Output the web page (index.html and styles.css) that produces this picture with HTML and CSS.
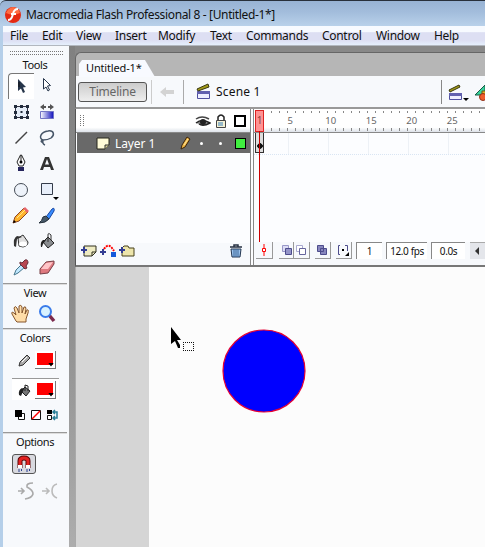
FILE: index.html
```html
<!DOCTYPE html>
<html lang="en">
<head>
<meta charset="utf-8">
<title>Macromedia Flash Professional 8</title>
<link rel="stylesheet" href="styles.css">
</head>
<body>
<div class="app">
  <header class="titlebar">
    <svg class="logo" width="18" height="18" viewBox="0 0 18 18"><circle cx="9" cy="9" r="8" fill="#e52a12"/><path d="M2 7Q4 2 9 1Q15 2 16 7Q9 10 2 7" fill="#ff6d43"/><path d="M14 3Q10 3 9 8L8 11Q7 14 4 14M7 8H12" fill="none" stroke="#fff" stroke-width="2"/></svg>
    <span class="title">Macromedia Flash Professional 8 - [Untitled-1*]</span>
  </header>
  <nav class="menu">
    <span class="m1">File</span><span class="m2">Edit</span><span class="m3">View</span><span class="m4">Insert</span><span class="m5">Modify</span><span class="m6">Text</span><span class="m7">Commands</span><span class="m8">Control</span><span class="m9">Window</span><span class="m10">Help</span>
  </nav>
  <div class="body">
    <aside class="tools">
      <div class="grip"></div>
      <h2 class="label tools-label">Tools</h2>
      <div class="tool-grid">
        <div class="tool active"><svg width="26" height="26"><path d="M10 6L18 14L15 14.5L17 19L15 20L13 15.5L10 18Z" fill="#26354a"/><path d="M11 9V14" stroke="#111"/></svg></div>
        <div class="tool"><svg width="26" height="26"><path d="M9.500 5.500L16.500 12.500L13.500 13L15.500 17L14 18L12 14L9.500 16Z" fill="#fff" stroke="#26354a"/></svg></div>
        <div class="tool"><svg width="26" height="26"><path d="M7.500 7.500H19.500V18.500H7.500Z" fill="#e5edf8" stroke="#334"/><path d="M6 6h3v3h-3zM12 6h3v3h-3zM18 6h3v3h-3zM6 12h3v3h-3zM18 12h3v3h-3zM6 17h3v3h-3zM12 17h3v3h-3zM18 17h3v3h-3zM12.500 12h2v2h-2z" fill="#222c3c"/></svg></div>
        <div class="tool"><svg width="26" height="26"><defs><linearGradient id="gr"><stop stop-color="#fff"/><stop offset="1" stop-color="#1010bd"/></linearGradient></defs><path d="M6.500 12.500H19.500V19.500H6.500Z" fill="url(#gr)" stroke="#7375c4"/><path d="M6 8L10 5V7H12V9H10V11ZM20 8L16 5V7H14V9H16V11Z" fill="#555"/></svg></div>
        <div class="tool"><svg width="26" height="26"><path d="M7.500 18.500L19 7" stroke="#444" stroke-width="1.400"/></svg></div>
        <div class="tool"><svg width="26" height="26"><path d="M9 15C4 13 7 7 14 6C20 5 21 10 17 13C14 15 11 15 9 15Q6 16 8 17Q10 15 9 15Q8 19 11 20" fill="none" stroke="#465567" stroke-width="1.500"/></svg></div>
        <div class="tool"><svg width="26" height="26"><path d="M12.500 4L9 11L11 15H15L17 11L13.500 4Z" fill="#fff" stroke="#222"/><path d="M13 4V11" stroke="#222"/><circle cx="13" cy="11" r="1.500"/><path d="M10 16H16V20H10Z" fill="#25245c"/></svg></div>
        <div class="tool"><svg width="26" height="26"><path d="M6 19L11 6H15L20 19H17L16 16H10L9 19ZM11 13.500H15L13 8Z" fill="#333" fill-rule="evenodd"/></svg></div>
        <div class="tool"><svg width="26" height="26"><circle cx="13" cy="13" r="6.500" fill="#eef3fa" stroke="#444b55"/></svg></div>
        <div class="tool"><svg width="26" height="26"><path d="M7.500 6.500H18.500V17.500H7.500Z" fill="#e8effa" stroke="#343b49"/><path d="M19 20H25L22 23Z"/></svg></div>
        <div class="tool"><svg width="26" height="26"><path d="M5 20L7 14L16 5L20 9L11 18Z" fill="#ffb42d" stroke="#8b4524"/><path d="M15 6L17 4L21 8L19 10Z" fill="#e8666c"/><path d="M9 15L17 7" stroke="#ffe68a"/><path d="M5 20L6 17L8 19Z"/></svg></div>
        <div class="tool"><svg width="26" height="26"><path d="M12 14L18 6Q21 4 20 8L15 16Z" fill="#378cff" stroke="#1745a1"/><path d="M5 20Q8 18 9 14L12 13L15 16Q12 20 5 20" fill="#475969" stroke="#26323c"/></svg></div>
        <div class="tool"><svg width="26" height="26"><path d="M10 9L15 6L20 13Q20 17 15 18L11 17Z" fill="#ddd" stroke="#333"/><path d="M6 17Q5 9 9 7L14 8L9 10L8 18Z" fill="#333"/><ellipse cx="15" cy="15" rx="4" ry="2.500" fill="#fff"/></svg></div>
        <div class="tool"><svg width="26" height="26"><path d="M9 13L14 8L20 14L14 19Z" fill="#8a8d90" stroke="#222"/><path d="M14 13V6Q14 3 17 6V11" fill="none" stroke="#333"/><path d="M7 18Q6 13 9 11L12 11L9 15L8 18Z" fill="#222"/></svg></div>
        <div class="tool"><svg width="26" height="26"><path d="M6 20L8 15L14 9L17 12L10 18Z" fill="#bfe8ff" stroke="#47758b"/><path d="M12 7L14 8L17 5Q20 4 20 8L18 11L19 13L17 14L12 9Z" fill="#b84651" stroke="#672d38"/></svg></div>
        <div class="tool"><svg width="26" height="26"><path d="M6 14L12 7L20 6L20 9L14 18L6 19Z" fill="#df7980" stroke="#784047"/><path d="M7 14L12 8L19 7L14 14Z" fill="#ffc5c8"/></svg></div>
      </div>
      <div class="rule"></div>
      <h2 class="label">View</h2>
      <div class="view-row">
        <svg width="26" height="26"><path d="M8 20L4 13Q3 10 6 12L8 14L6 7Q7 4 9 7L11 12V5Q13 3 14 6V12L16 6Q18 5 18 8L17 13L19 9Q21 8 20 12L18 18V21H9Z" fill="#ffdda8" stroke="#85552c"/></svg>
        <svg width="26" height="26"><path d="M15 14L20 20" stroke="#7b2a4d" stroke-width="3.500"/><circle cx="11.500" cy="10.500" r="5.500" fill="#d8f2ff" stroke="#397bea" stroke-width="2"/></svg>
      </div>
      <div class="rule"></div>
      <h2 class="label">Colors</h2>
      <div class="color-row">
        <svg width="20" height="22"><path d="M5 17L6 13L13 6L16 9L9 16Z" fill="#aaa" stroke="#333"/><path d="M8 13L13 8" stroke="#fff"/></svg>
        <div class="swatch"><i></i></div>
      </div>
      <div class="color-row fill">
        <svg width="20" height="22"><path d="M7 12L11 8L16 12L12 17Z" fill="#777" stroke="#222"/><path d="M11 12V6L14 7V12" fill="none" stroke="#222"/><path d="M5 16Q4 11 8 9L10 10L7 17Z" fill="#222"/></svg>
        <div class="swatch"><i></i></div>
      </div>
      <div class="mini-row">
        <svg width="12" height="12"><path d="M4.500 4.500H10.500V10.500H4.500Z" fill="#fff" stroke="#111"/><path d="M1 1H8V8H1Z"/></svg>
        <svg width="12" height="12"><path d="M1.500 1.500H10.500V10.500H1.500Z" fill="#fff" stroke="#111"/><path d="M2 10L10 2" stroke="red" stroke-width="1.500"/></svg>
        <svg width="14" height="12"><path d="M1 1H6V5H1Z"/><path d="M1.500 6.500H5.500V10.500H1.500Z" fill="#fff" stroke="#111"/><path d="M7 3H11V9H7M9 1L7 3L9 5M9 7L7 9L9 11" fill="none" stroke="#287e96" stroke-width="1.500"/></svg>
      </div>
      <div class="rule"></div>
      <h2 class="label">Options</h2>
      <div class="magnet"><svg width="22" height="18"><path d="M7 13V6Q7 3 11 3Q15 3 15 6V13" fill="none" stroke="#5c0808" stroke-width="5"/><path d="M7 13V6Q7 3 11 3Q15 3 15 6V13" fill="none" stroke="#e42222" stroke-width="3"/><path d="M5 11.500H9M13 11.500H17" stroke="#fff" stroke-width="3"/><path d="M6 14V17M8.500 14V16M14 14V17M16.500 14V16" stroke="#283f91"/></svg></div>
      <div class="curves">
        <svg width="22" height="22"><path d="M3 11H8M6 8L9 11L6 14M18 3Q11 3 12 7Q18 10 18 14Q17 18 10 19" fill="none" stroke="#aaa" stroke-width="1.600"/></svg>
        <svg width="22" height="22"><path d="M2 11H8M6 8L9 11L6 14M17 4Q12 5 12 11Q12 16 17 18" fill="none" stroke="#bbb" stroke-width="1.600"/></svg>
      </div>
    </aside>
    <div class="gutter"></div>
    <main class="document">
      <div class="tabs"><div class="tab"><span>Untitled-1*</span></div></div>
      <div class="scenebar">
        <div class="timeline-btn">Timeline</div>
        <div class="back"><svg width="16" height="12"><path d="M0 6L6 1V4H14V8H6V11Z" fill="#d3d3d3"/></svg></div>
        <svg class="clap" width="16" height="17"><path d="M1.500 8.500H13.500V15.500H1.500Z" fill="#eeefff" stroke="#5050a0"/><path d="M1 8H14V11H1Z" fill="#6261af"/><path d="M1 6L12 1L13 4L2 8Z" fill="#a19919" stroke="#38370e"/></svg>
        <span class="scene">Scene 1</span>
        <div class="scene-actions">
          <svg width="22" height="18"><path d="M1.500 9.500H13.500V15.500H1.500Z" fill="#eeefff" stroke="#5050a0"/><path d="M1 9H14V12H1Z" fill="#6261af"/><path d="M1 6L11 1L12 3L2 8Z" fill="#a19919" stroke="#38370e"/><path d="M15 14H21L18 17Z"/></svg>
          <svg width="12" height="18"><path d="M1 11L11 1V11Z" fill="#38d39b" stroke="#175a45"/><path d="M8 7H13V12H8Z" fill="#e3b622" stroke="#65541a"/><circle cx="9" cy="13" r="3.500" fill="#f05d2c" stroke="#903018"/></svg>
        </div>
      </div>
      <section class="timeline">
        <div class="layers">
          <div class="layers-head">
            <i class="dots"></i>
            <svg class="eye" width="16" height="12"><path d="M1 4Q7 0 14 4" fill="none" stroke="#444" stroke-width="1.500"/><path d="M1 8Q7 3 15 8Q8 12 4 9" fill="#888" stroke="#222" stroke-width="1.500"/><circle cx="8" cy="7" r="3" fill="#222"/></svg>
            <svg class="lock" width="12" height="14"><path d="M3 7V3Q6-1 9 3V7" fill="none" stroke="#222" stroke-width="1.500"/><path d="M1.500 6.500H10.500V13.500H1.500Z" fill="#f5f2d5" stroke="#444"/><path d="M3 9H8M3 11H8" stroke="#377fbb"/></svg>
            <i class="outline"></i>
          </div>
          <div class="layer">
            <svg class="page" width="14" height="13"><path d="M1 1H13V8L9 12H1Z" fill="#fffbd8" stroke="#27271c"/><path d="M9 12V8H13" fill="#d4cf9b" stroke="#333"/></svg>
            <span>Layer 1</span>
            <svg class="pen" width="12" height="14"><path d="M2 13L3 9L8 1L11 3L6 11Z" fill="#efb647" stroke="#3c250d"/><path d="M5 9L9 3" stroke="#ffe8a0"/></svg>
            <i class="dot"></i><i class="dot"></i><i class="green"></i>
          </div>
          <div class="layers-foot">
            <svg width="17" height="14"><path d="M3 2H15V8L11 12H3Z" fill="#eeebc2" stroke="#303020"/><path d="M11 12V8H15" fill="none" stroke="#303020"/><path d="M0 6H6M3 3V9" stroke="#333d93" stroke-width="2"/></svg>
            <svg width="17" height="14"><path d="M4 5Q8-1 12 4L14 7" fill="none" stroke="red" stroke-width="2" stroke-dasharray="2 1"/><path d="M0 8H6M3 5V11" stroke="#333d93" stroke-width="2"/><path d="M11 8H16V13H11Z" fill="#1459db"/></svg>
            <svg width="17" height="14"><path d="M3 4L5 2H9L10 4H15V12H3Z" fill="#ede5ab" stroke="#47401c"/><path d="M0 6H6M3 3V9" stroke="#333d93" stroke-width="2"/></svg>
            <svg class="trash" width="14" height="14"><path d="M1 3H13M5 3V1H9V3" fill="none" stroke="#273142" stroke-width="1.500"/><path d="M2 5H12L11 13H3Z" fill="#9cc4ee" stroke="#243650"/><path d="M5 5V13M7 5V13M9 5V13" stroke="#3a6496"/></svg>
          </div>
        </div>
        <div class="frames">
          <div class="ruler">
            <span>5</span><span>10</span><span>15</span><span>20</span><span>25</span>
          </div>
          <div class="frame-row"><div class="keyframe"></div></div>
          <div class="frames-foot">
            <div class="btn b1"><svg width="16" height="16"><path d="M8 2V14" stroke="red"/><path d="M6.500 6.500H9.500V9.500H6.500Z" fill="#fff" stroke="red"/></svg></div>
            <div class="btn b2"><svg width="14" height="16"><path d="M3.500 3.500H9.500V9.500H3.500Z" fill="#ddddf5" stroke="#9998c8"/><path d="M6.500 6.500H12.500V12.500H6.500Z" fill="#9494c8" stroke="#4d4c8c"/></svg></div>
            <div class="btn b3"><svg width="14" height="16"><path d="M2.500 3.500H8.500V9.500H2.500Z" fill="#fff" stroke="#aaaad0"/><path d="M5.500 6.500H11.500V12.500H5.500Z" fill="#fff" stroke="#66659d"/></svg></div>
            <div class="btn b4"><svg width="14" height="16"><path d="M2.500 3.500H8.500V9.500H2.500ZM5.500 6.500H11.500V12.500H5.500Z" fill="#8786bd" stroke="#4d4c8c"/></svg></div>
            <div class="btn b5"><svg width="14" height="16"><path d="M4 3.500H2.500V12.500H4M9 3.500H11.500V9" fill="none" stroke="#4d4c8c"/><path d="M6 7H8V9H6Z"/><path d="M13 10V14H9Z"/></svg></div>
            <div class="field f1">1</div><div class="field f2">12.0 fps</div><div class="field f3">0.0s</div>
            <div class="scroll"><svg width="14" height="16"><path d="M9 4V12L5 8Z" fill="#333"/></svg></div>
          </div>
          <div class="playhead"><b>1</b></div>
        </div>
      </section>
      <div class="stage">
        <div class="paste"></div>
        <svg class="canvas" width="336" height="280"><circle cx="115" cy="104" r="41" fill="#00f" stroke="#e50032" stroke-width="1.200"/><path d="M22 60V77L26 74L29 81H31V78L28 73H32Z" fill="#000"/><path d="M34 75.500H45M34 83.500H45M34.500 75V84M44.500 75V84" fill="none" stroke="#111" stroke-dasharray="1 1"/></svg>
      </div>
    </main>
  </div>
</div>
</body>
</html>
```
FILE: styles.css
```css
* { box-sizing: border-box; }
body { margin: 0; font-family: "Noto Sans", "Open Sans", sans-serif; font-size: 11px; color: #111; overflow: hidden; }
svg { display: block; flex: none; }
.app { width: 485px; height: 547px; display: flex; flex-direction: column; background: #b5cfe9; }
.titlebar { height: 26px; flex: none; display: flex; align-items: center; padding: 2px 0 0 4px; border-top: 1px solid #28303b; border-top-left-radius: 6px; background: linear-gradient(#98b3d4, #a3bddc 45%, #b9d1ea); }
.title { margin-left: 4px; font-size: 12px; letter-spacing: -.36px; white-space: nowrap; }
.menu { height: 20px; flex: none; margin-left: 3px; padding-left: 7px; display: flex; align-items: center; background: linear-gradient(#f7faff 0 30%, #dddff3 35% 75%, #e5effc); border-bottom: 1px solid #b2b7bf; font-size: 12px; line-height: 18px; letter-spacing: -.3px; }
.menu span { white-space: nowrap; flex: none; }
.m1 { width: 32px; } .m2 { width: 34px; } .m3 { width: 39px; } .m4 { width: 43px; } .m5 { width: 52px; } .m6 { width: 36px; } .m7 { width: 76px; } .m8 { width: 54px; } .m9 { width: 58px; } .m10 { width: 40px; }
.body { flex: 1; min-height: 0; display: flex; padding-left: 3px; }
.tools { width: 66px; background: #f7f9fc; padding: 5px 2px 0 0; }
.grip { width: 53px; height: 4px; margin-left: 7px; background: repeating-linear-gradient(90deg, #777 0 1px, transparent 1px 2px) 0 0 / 100% 1px no-repeat, repeating-linear-gradient(90deg, #777 0 1px, transparent 1px 2px) 0 3px / 100% 1px no-repeat; }
.label { margin: 0; height: 16px; line-height: 16px; font-size: 11px; font-weight: 400; text-align: center; letter-spacing: -.4px; }
.tools-label { margin-top: 2px; }
.tool-grid { display: grid; grid-template-columns: 26px 26px; grid-auto-rows: 26px; padding-left: 5px; }
.active { background: #fff; border-top: 1px solid #777; border-left: 1px solid #777; border-radius: 4px 0 0 0; }
.active svg { margin: -1px 0 0 -1px; }
.rule { height: 2px; border-top: 1px solid #999; border-bottom: 1px solid #ddd; margin-top: 2px; }
.view-row { display: flex; height: 25px; padding-left: 5px; }
.color-row { display: flex; align-items: center; height: 27px; padding-left: 11px; gap: 1px; }
.color-row.fill { height: 22px; border-top: 1px solid #999; margin: 5px 8px 0 9px; padding-left: 2px; background: #fff; }
.swatch { width: 21px; height: 18px; padding: 2px 3px 3px 2px; background: #fff; border-right: 1px solid #777; border-bottom: 1px solid #777; position: relative; }
.swatch::before { content: ""; display: block; width: 16px; height: 12px; background: red; }
.swatch i { position: absolute; right: 1px; bottom: 1px; width: 6px; height: 4px; background: #000; clip-path: polygon(0 0,100% 0,50% 100%); }
.mini-row { display: flex; gap: 4px; padding: 9px 0 0 11px; height: 30px; }
.magnet { width: 24px; height: 20px; margin: 4px 0 0 9px; border: 1px solid #555; border-radius: 3px; background: #d8d9df; }
.curves { display: flex; gap: 3px; margin: 6px 0 0 12px; }
.gutter { width: 6px; background: linear-gradient(#818181, #8d8d8d 50%, #adadad); }
.document { flex: 1; min-width: 0; border-top: 6px solid #888; background: #888; display: flex; flex-direction: column; }
.tabs { height: 24px; flex: none; padding: 7px 0 0 3px; background: #b6b6b6; border-top: 1px solid #666; border-left: 1px solid #666; border-radius: 6px 0 0 0; }
.tab { width: 76px; height: 17px; padding: 0 0 0 7px; background: #f8faff; clip-path: polygon(0 4px, 3px 0, 66px 0, 76px 100%, 0 100%); white-space: nowrap; line-height: 16px; letter-spacing: -.15px; }
.scenebar { height: 33px; flex: none; border-left: 1px solid #666; border-bottom: 2px solid #999; background: #f7f9fc; padding-left: 2px; display: flex; align-items: center; }
.timeline-btn { width: 69px; height: 20px; border: 1px solid #555; border-radius: 3px; background: linear-gradient(#ccc, #eee); color: #666; text-align: center; line-height: 18px; font-size: 12px; letter-spacing: -.2px; }
.back { width: 33px; margin-left: 4px; height: 24px; border-left: 1px solid #ccc; border-right: 1px solid #aaa; display: flex; align-items: center; padding-left: 8px; }
.clap { margin-left: 12px; }
.scene { margin-left: 4px; font-size: 12px; white-space: nowrap; letter-spacing: .2px; }
.scene-actions { margin-left: auto; height: 24px; border-left: 1px solid #888; padding: 4px 0 0 6px; display: flex; gap: 4px; margin-right: -1px; }
.timeline { height: 158px; flex: none; border-left: 1px solid #555; border-bottom: 2px solid #777; background: #fcfdff; display: flex; }
.layers { width: 175px; flex: none; border-right: 1px solid #888; display: flex; flex-direction: column; }
.layers-head { height: 24px; display: flex; align-items: center; background: linear-gradient(#fff 0 80%, #dde2e9); border-bottom: 1px solid #888; }
.dots { width: 6px; height: 11px; margin-left: 4px; background: repeating-linear-gradient(#777 0 1px, transparent 1px 2px) 0 0 / 1px 11px no-repeat, repeating-linear-gradient(#777 0 1px, transparent 1px 2px) 3px 0 / 1px 11px no-repeat; }
.eye { margin-left: 109px; } .lock { margin-left: 4px; }
.outline { width: 12px; height: 12px; border: 2px solid #000; background: #fff; margin-left: 7px; }
.layer { height: 20px; display: flex; align-items: center; margin-left: 1px; background: #696969; color: #fff; font-size: 12px; }
.page { margin-left: 19px; }
.layer span { width: 64px; margin-left: 5px; letter-spacing: -.1px; }
.dot { width: 3px; height: 3px; border-radius: 2px; background: #fff; margin-left: 9px; }
.dot + .dot { margin-left: 16px; }
.green { width: 11px; height: 11px; border: 1px solid #000; background: #40ef40; margin-left: 13px; }
.layers-foot { margin-top: auto; height: 22px; display: flex; gap: 2px; padding: 1px 7px 0 5px; background: #f7f9fc; }
.trash { margin-left: auto; }
.frames { flex: 1; min-width: 0; margin-left: 2px; border-left: 1px solid #888; position: relative; display: flex; flex-direction: column; }
.ruler { height: 24px; flex: none; border-bottom: 1px solid #888; padding-left: 16px; display: flex; color: #666; font-size: 9.500px; line-height: 23px; background: repeating-linear-gradient(90deg, #888 0 1px, transparent 1px 8px) 9px 2px / 100% 2px no-repeat, repeating-linear-gradient(90deg, #888 0 1px, transparent 1px 8px) 9px 19px / 100% 3px no-repeat, linear-gradient(#fff 0 80%, #dde2e9); }
.ruler span { width: 40.500px; flex: none; text-align: center; }
.frame-row { height: 22px; padding-left: 1px; background: repeating-linear-gradient(90deg, transparent 0 39px, #edf1f6 39px 40px) -5px 0; border-bottom: 1px dotted #d9e5f3; }
.keyframe { width: 9px; height: 20px; border: 1px solid #333; border-top: 0; background: radial-gradient(circle at 4px 13px, #111 0 2.500px, transparent 3px), #ddd; }
.frames-foot { margin-top: auto; height: 23px; display: flex; background: #f7f9fc; padding-left: 2px; }
.btn { height: 17px; flex: none; border-right: 1px solid #999; border-bottom: 1px solid #999; }
.b1 { width: 17px; } .b2 { width: 15px; margin-left: 6px; } .b3 { width: 16px; } .b4 { width: 16px; margin-left: 5px; } .b5 { width: 16px; margin-left: 5px; }
.field { height: 17px; flex: none; border-top: 1px solid #888; border-left: 1px solid #888; background: #fff; text-align: center; line-height: 17px; font-size: 10px; letter-spacing: -.4px; white-space: nowrap; }
.f1 { width: 26px; margin-left: 4px; } .f2 { width: 41px; margin-left: 4px; } .f3 { width: 34px; margin-left: 4px; }
.scroll { width: 16px; height: 17px; margin-left: 5px; background: #e4e6eb; border-top: 1px solid #aaa; flex: none; }
.playhead { position: absolute; left: 1px; top: 1px; width: 9px; height: 22px; background: #ff9292; border: 1px solid #d22; }
.playhead b { font-size: 10px; font-weight: 400; color: #8b3e3e; line-height: 18px; display: block; text-align: center; }
.playhead::after { content: ""; position: absolute; left: 3px; top: 20px; width: 1px; height: 111px; background: #c00; }
.stage { flex: 1; min-height: 0; display: flex; border-left: 1px solid #aaa; background: #fcfcfc; }
.paste { width: 73px; background: #d5d5d5; flex: none; }
```
